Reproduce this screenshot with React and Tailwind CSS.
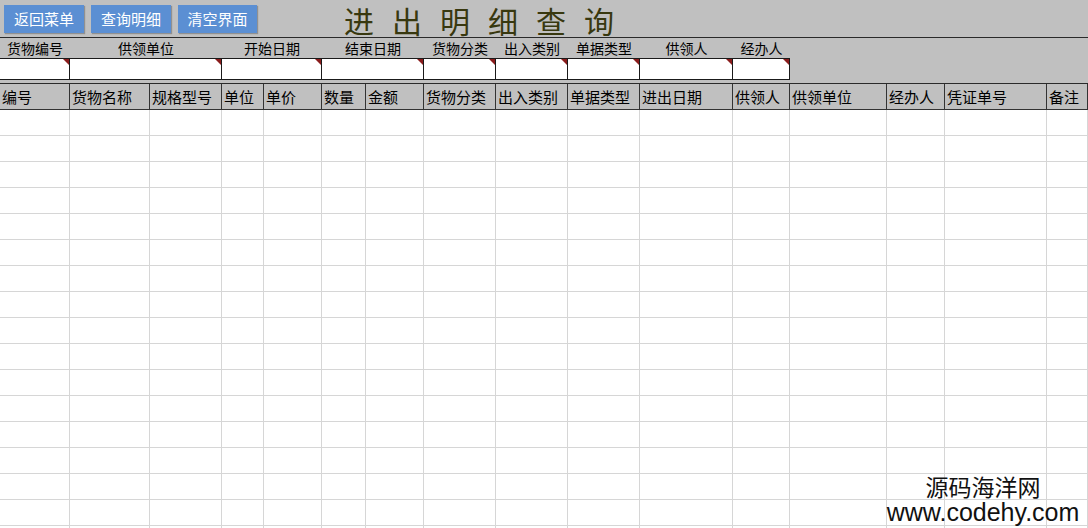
import React from "react";

const headerCols = [
  ["编号", 70], ["货物名称", 80], ["规格型号", 72], ["单位", 42], ["单价", 58],
  ["数量", 44], ["金额", 58], ["货物分类", 72], ["出入类别", 72], ["单据类型", 72],
  ["进出日期", 93], ["供领人", 57], ["供领单位", 97], ["经办人", 58], ["凭证单号", 102], ["备注", 41],
];

const filterCols = [
  ["货物编号", 70], ["供领单位", 152], ["开始日期", 100], ["结束日期", 102],
  ["货物分类", 72], ["出入类别", 72], ["单据类型", 72], ["供领人", 93], ["经办人", 57],
];

const font = { fontFamily: '"Noto Sans CJK SC", "Noto Sans", sans-serif' };

function Btn({ children, w }) {
  return (
    <div
      className="h-[28px] bg-[#5b8fd3] text-white text-[15px] flex items-center justify-center shadow-[1px_1px_1px_rgba(0,0,0,0.25)]"
      style={{ width: w }}
    >
      {children}
    </div>
  );
}

export default function App() {
  const rows = Array.from({ length: 17 });
  return (
    <div className="relative w-[1088px] h-[528px] overflow-hidden bg-white text-black" style={font}>
      {/* title row */}
      <div className="h-[38px] bg-[#c0c0c0] border-b border-[#2a2a2a] flex items-start pt-[5px] pl-[4px]">
        <div className="flex gap-[7px]">
          <Btn w={80}>返回菜单</Btn>
          <Btn w={80}>查询明细</Btn>
          <Btn w={79}>清空界面</Btn>
        </div>
        <div className="ml-[87px] -mt-[2px] text-[30px] leading-[34px] tracking-[18px] text-[#38380f] whitespace-nowrap" style={{ fontFamily: '"Noto Sans CJK SC", serif' }}>
          进出明细查询
        </div>
      </div>
      {/* label row */}
      <div className="h-[20px] bg-[#c0c0c0] flex text-[14px] leading-[20px]">
        {filterCols.map(([t, w], i) => (
          <div key={i} className="flex justify-center overflow-hidden" style={{ width: w }}>
            <span className="whitespace-nowrap">{t}</span>
          </div>
        ))}
      </div>
      {/* input row */}
      <div className="bg-[#c0c0c0]">
        <div className="flex w-[790px] h-[22px] border-y border-[#1a1a1a] bg-white">
          {filterCols.map(([t, w], i) => (
            <div key={i} className="relative h-full border-r border-[#1a1a1a]" style={{ width: w }}>
              <div className="absolute top-0 right-0 w-0 h-0 border-t-[6px] border-l-[6px] border-t-[#8a1c1c] border-l-transparent" />
            </div>
          ))}
        </div>
      </div>
      {/* gap */}
      <div className="h-[4px] bg-[#c0c0c0] border-b border-[#2a2a2a]" />
      {/* header row */}
      <div className="flex h-[26px] bg-[#c0c0c0] border-b border-[#333] text-[15px] leading-[25px]">
        {headerCols.map(([t, w], i) => (
          <div key={i} className="h-full border-r border-[#333] pl-[2px] whitespace-nowrap overflow-hidden" style={{ width: w }}>{t}</div>
        ))}
      </div>
      {/* data rows */}
      {rows.map((_, r) => (
        <div key={r} className="flex h-[26px] border-b border-[#d6d6d6]">
          {headerCols.map(([t, w], i) => (
            <div key={i} className="h-full border-r border-[#d6d6d6]" style={{ width: w }} />
          ))}
        </div>
      ))}
      {/* watermark */}
      <div className="absolute left-[878px] top-[471px] w-[210px] flex flex-col items-center">
        <div className="text-[23px] leading-[30px] text-[#111]" style={font}>源码海洋网</div>
        <div className="text-[25px] leading-[22px] text-[#111]" style={{ fontFamily: '"Liberation Sans", Arial, sans-serif' }}>www.codehy.com</div>
      </div>
    </div>
  );
}
